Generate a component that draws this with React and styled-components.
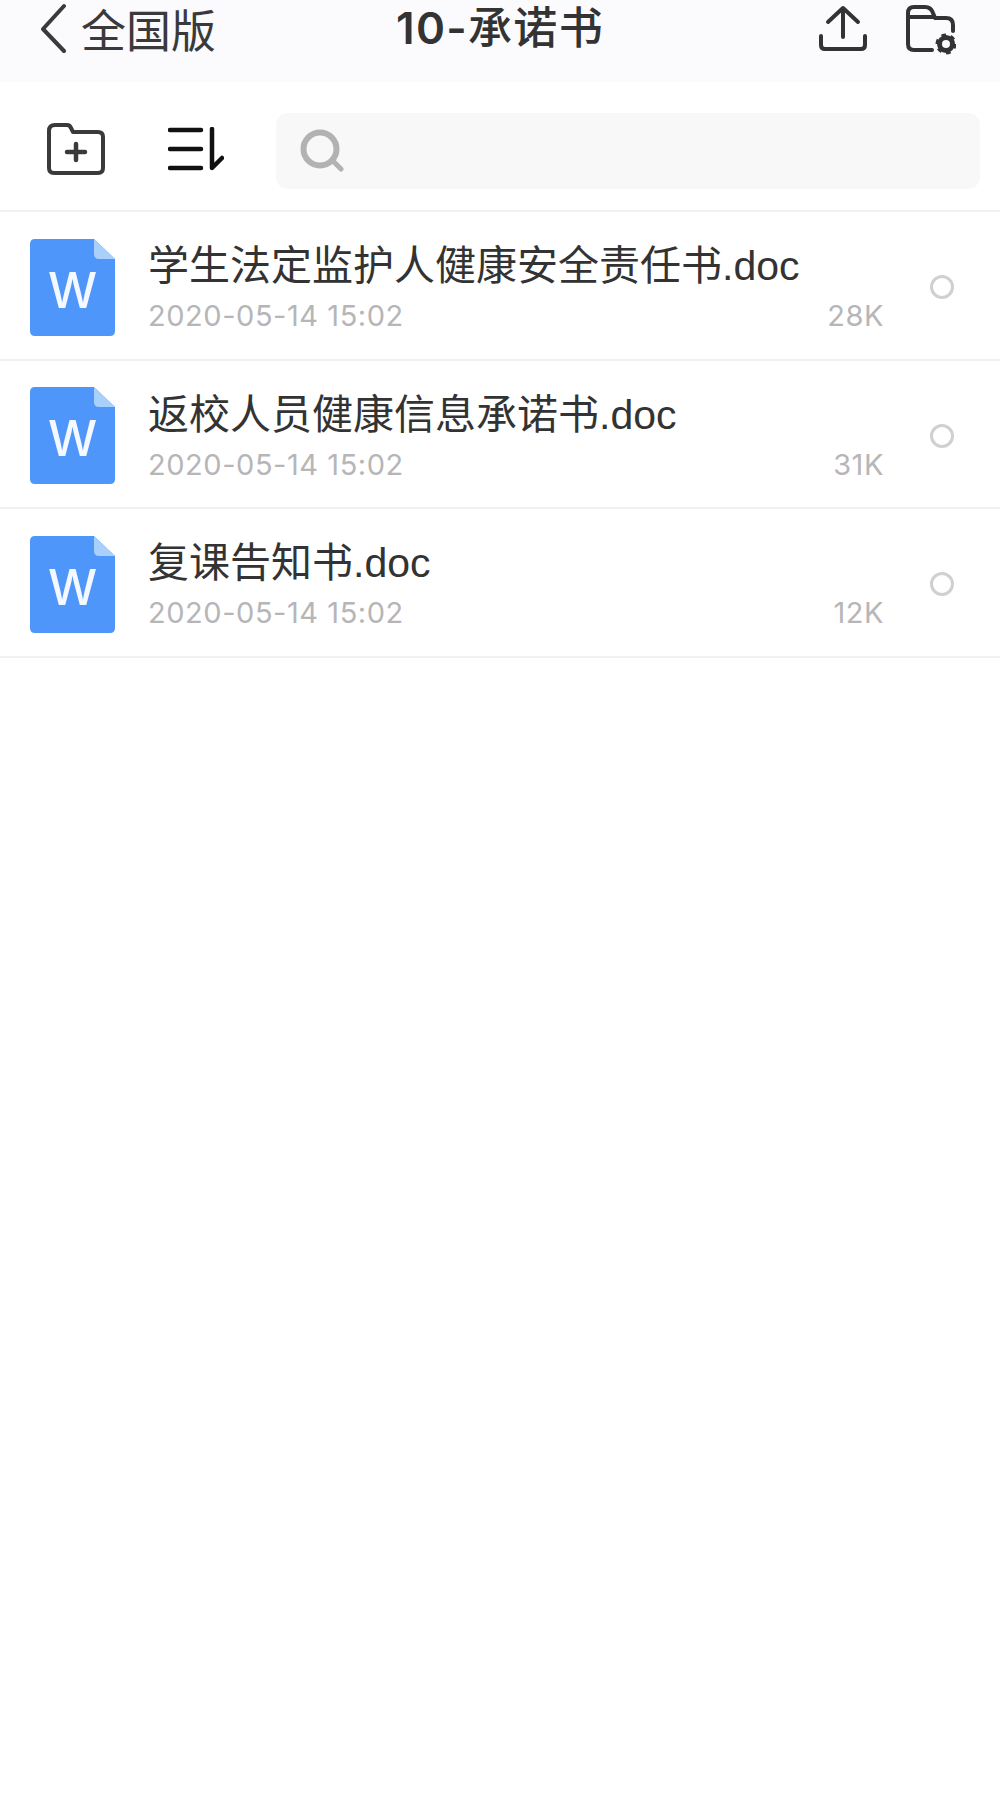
import React from "react";
import styled, { createGlobalStyle } from "styled-components";

const GlobalStyle = createGlobalStyle`
  html, body {
    margin: 0;
    padding: 0;
    background: #fff;
  }
  body {
    font-family: "Liberation Sans", "Noto Sans CJK SC", sans-serif;
    color: #333;
  }
`;

const Page = styled.div`
  width: 1000px;
  height: 1796px;
  background: #fff;
  overflow: hidden;
`;

const Header = styled.header`
  height: 82px;
  background: #fbfbfe;
  display: grid;
  grid-template-columns: 1fr auto 1fr;
  align-items: flex-start;
`;

const BackLink = styled.div`
  display: flex;
  align-items: center;
  gap: 15px;
  padding: 0 0 0 40px;
  height: 56px;
  font-size: 45px;
  color: #3a3a3c;
`;

const Title = styled.h1`
  margin: 0;
  height: 56px;
  line-height: 56px;
  font-family: "Inter", "Noto Sans CJK SC", sans-serif;
  font-size: 44px;
  font-weight: 600;
  letter-spacing: 1.3px;
  color: #333;
`;

const TitleCjk = styled.span`
  font-weight: 500;
`;

const HeaderActions = styled.div`
  display: flex;
  justify-content: flex-end;
  gap: 39px;
  padding: 5px 44px 0 0;
`;

const Toolbar = styled.div`
  height: 130px;
  box-sizing: border-box;
  border-bottom: 2px solid #f1f1f3;
  display: flex;
  align-items: center;
  padding: 3px 20px 0 47px;
`;

const ToolIcons = styled.div`
  display: flex;
  align-items: center;
  gap: 63px;
  margin: 2px 52px 0 0;
`;

const SearchBox = styled.div`
  flex: 1;
  height: 76px;
  margin-top: 6px;
  border-radius: 12px;
  background: #f8f8f8;
  display: flex;
  align-items: center;
  padding-left: 24px;
`;

const FileRow = styled.div`
  height: 148.5px;
  box-sizing: border-box;
  border-bottom: 2px solid #f1f1f3;
  display: flex;
  align-items: center;
  padding: 4px 46px 0 30px;
`;

const FileIcon = styled.svg`
  width: 85px;
  height: 97px;
  margin-right: 33px;
  flex: none;
`;

const FileBody = styled.div`
  flex: 1;
  min-width: 0;
`;

const FileName = styled.div`
  font-size: 41px;
  line-height: 52px;
  color: #333;
  white-space: nowrap;
`;

const FileMeta = styled.div`
  display: flex;
  justify-content: space-between;
  margin-top: 6px;
  padding-right: 46px;
  font-family: "Inter", sans-serif;
  font-size: 29px;
  line-height: 36px;
  letter-spacing: 0.55px;
  color: #b6b6b8;
`;

const Radio = styled.span`
  width: 24px;
  height: 24px;
  box-sizing: border-box;
  flex: none;
  border: 3px solid #d0d0d0;
  border-radius: 50%;
`;

const BackIcon = () => (
  <svg width="26" height="50" viewBox="0 0 26 50" fill="none">
    <path d="M24 3 L3 26 L24 48" stroke="#3a3a3c" strokeWidth="4" strokeLinecap="round" strokeLinejoin="round" />
  </svg>
);

const UploadIcon = () => (
  <svg width="48" height="46" viewBox="0 0 48 46" fill="none" stroke="#333" strokeWidth="4" strokeLinecap="round" strokeLinejoin="round">
    <path d="M24 32 V3 M9 17 L24 3 L39 17" />
    <path d="M2 31 V40 Q2 44 6 44 H42 Q46 44 46 40 V31" />
  </svg>
);

const FolderSettingsIcon = () => (
  <svg width="50" height="50" viewBox="0 0 50 50" fill="none">
    <path
      d="M26 45 H8 Q2 45 2 39 V8 Q2 2 8 2 H19 Q25 2 27 8 L29 13 H40 Q47 13 47 20 V26 M2 12 H28"
      stroke="#333"
      strokeWidth="4"
      strokeLinecap="round"
      strokeLinejoin="round"
    />
    <circle cx="40" cy="39" r="6.5" stroke="#333" strokeWidth="5" />
    <circle cx="40" cy="39" r="9" stroke="#333" strokeWidth="3" strokeDasharray="4.5 4.9" />
  </svg>
);

const NewFolderIcon = () => (
  <svg width="58" height="52" viewBox="0 0 58 52" fill="none" stroke="#3a3a3c" strokeLinecap="round" strokeLinejoin="round">
    <path d="M2 8 Q2 2 8 2 H20 Q23 2 24 5 L26 9 H51 Q56 9 56 14 V45 Q56 50 51 50 H7 Q2 50 2 45 Z" strokeWidth="4" />
    <path d="M20 29 H38 M29 21 V37" strokeWidth="4.5" />
  </svg>
);

const SortIcon = () => (
  <svg width="56" height="44" viewBox="0 0 56 44" fill="none" stroke="#111" strokeWidth="4.5" strokeLinecap="round" strokeLinejoin="round">
    <path d="M2 3 H33 M2 22 H33 M2 41 H33" />
    <path d="M44 2 V41 L54 31" />
  </svg>
);

const SearchIcon = () => (
  <svg width="44" height="44" viewBox="0 0 44 44" fill="none" stroke="#b2b2b2" strokeLinecap="round">
    <circle cx="20" cy="20" r="16.5" strokeWidth="6" />
    <path d="M33 32 L41 40" strokeWidth="5" />
  </svg>
);

const WordIcon = () => (
  <FileIcon viewBox="0 0 85 97">
    <path d="M5 0 H64 L85 20 V92 Q85 97 80 97 H5 Q0 97 0 92 V5 Q0 0 5 0 Z" fill="#4f96fb" />
    <path d="M64 0 L85 20 H69 Q64 20 64 15 Z" fill="#a9d0fb" />
    <text x="42.5" y="69" textAnchor="middle" fontFamily="Inter" fontWeight="500" fontSize="49" fill="#f4f8ff">W</text>
  </FileIcon>
);

const files = [
  { name: "学生法定监护人健康安全责任书.doc", date: "2020-05-14 15:02", size: "28K" },
  { name: "返校人员健康信息承诺书.doc", date: "2020-05-14 15:02", size: "31K" },
  { name: "复课告知书.doc", date: "2020-05-14 15:02", size: "12K" },
];

export default function App() {
  return (
    <Page>
      <GlobalStyle />
      <Header>
        <BackLink>
          <BackIcon />
          全国版
        </BackLink>
        <Title>
          10-<TitleCjk>承诺书</TitleCjk>
        </Title>
        <HeaderActions>
          <UploadIcon />
          <FolderSettingsIcon />
        </HeaderActions>
      </Header>
      <Toolbar>
        <ToolIcons>
          <NewFolderIcon />
          <SortIcon />
        </ToolIcons>
        <SearchBox>
          <SearchIcon />
        </SearchBox>
      </Toolbar>
      {files.map((file) => (
        <FileRow key={file.name}>
          <WordIcon />
          <FileBody>
            <FileName>{file.name}</FileName>
            <FileMeta>
              <span>{file.date}</span>
              <span>{file.size}</span>
            </FileMeta>
          </FileBody>
          <Radio />
        </FileRow>
      ))}
    </Page>
  );
}
